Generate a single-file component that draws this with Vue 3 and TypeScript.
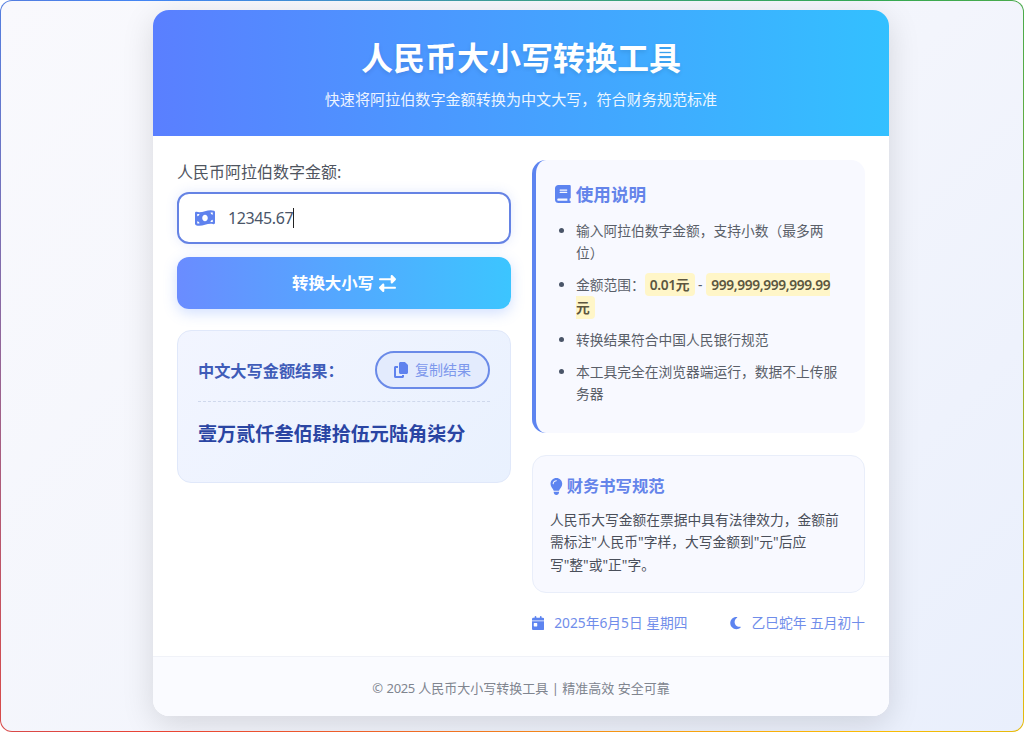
<script setup lang="ts">
const rules: string[] = ['转换结果符合中国人民银行规范', '本工具完全在浏览器端运行，数据不上传服务器']
</script>

<template>
  <div class="frame">
    <div class="page">
      <main class="card">
        <header class="head">
          <h1>人民币大小写转换工具</h1>
          <p>快速将阿拉伯数字金额转换为中文大写，符合财务规范标准</p>
        </header>
        <section class="body">
          <div class="col-left">
            <label class="label">人民币阿拉伯数字金额:</label>
            <div class="input">
              <svg class="i-money" viewBox="0 0 576 512"><path d="M0 112.5V422.3c0 18 10.1 35 27 41.3c87 32.5 174 10.3 261-11.9c79.8-20.3 159.6-40.7 239.3-18.9c23 6.3 48.7-9.5 48.7-33.4V89.7c0-18-10.1-35-27-41.3C462 15.9 375 38.1 288 60.3C208.2 80.6 128.4 100.9 48.7 79.1C25.6 72.8 0 88.6 0 112.5zM288 352c-44.2 0-80-43-80-96s35.8-96 80-96s80 43 80 96s-35.8 96-80 96zM64 352c35.3 0 64 28.7 64 64H64V352zm64-208c0 35.3-28.7 64-64 64V144h64zM512 304v64H448c0-35.3 28.7-64 64-64zM448 96h64v64c-35.3 0-64-28.7-64-64z"/></svg>
              <span class="value num">12345.67</span><span class="caret"></span>
            </div>
            <button class="convert">
              <span>转换大小写</span>
              <svg class="i-swap" viewBox="0 0 512 512"><path d="M32 96l320 0V32c0-12.9 7.8-24.6 19.8-29.6s25.7-2.2 34.9 6.9l96 96c6 6 9.4 14.1 9.4 22.6s-3.4 16.6-9.4 22.6l-96 96c-9.2 9.2-22.9 11.9-34.9 6.9s-19.8-16.6-19.8-29.6V160L32 160c-17.7 0-32-14.3-32-32s14.3-32 32-32zM480 352c17.7 0 32 14.3 32 32s-14.3 32-32 32H160v64c0 12.9-7.8 24.6-19.8 29.6s-25.7 2.2-34.9-6.9l-96-96c-6-6-9.4-14.1-9.4-22.6s3.4-16.6 9.4-22.6l96-96c9.2-9.2 22.9-11.9 34.9-6.9s19.8 16.6 19.8 29.6l0 64H480z"/></svg>
            </button>
            <div class="result">
              <div class="result-head">
                <span class="result-title">中文大写金额结果：</span>
                <button class="copy">
                  <svg class="i-copy" viewBox="0 0 448 512"><path d="M208 0H332.1c12.7 0 24.9 5.1 33.9 14.1l67.9 67.9c9 9 14.1 21.2 14.1 33.9V336c0 26.5-21.5 48-48 48H208c-26.5 0-48-21.5-48-48V48c0-26.5 21.5-48 48-48zM48 128h80v64H64V448H256V416h64v48c0 26.5-21.5 48-48 48H48c-26.5 0-48-21.5-48-48V176c0-26.5 21.5-48 48-48z"/></svg>
                  <span>复制结果</span>
                </button>
              </div>
              <div class="result-text">壹万贰仟叁佰肆拾伍元陆角柒分</div>
            </div>
          </div>
          <div class="col-right">
            <div class="info">
              <h3 class="info-title">
                <svg class="i-book" viewBox="0 0 448 512"><path d="M96 0C43 0 0 43 0 96V416c0 53 43 96 96 96H384h32c17.7 0 32-14.3 32-32s-14.3-32-32-32V384c17.7 0 32-14.3 32-32V32c0-17.7-14.3-32-32-32H384 96zm0 384H352v64H96c-17.7 0-32-14.3-32-32s14.3-32 32-32zm32-240c0-8.8 7.2-16 16-16H336c8.8 0 16 7.2 16 16s-7.2 16-16 16H144c-8.8 0-16-7.2-16-16zm16 48H336c8.8 0 16 7.2 16 16s-7.2 16-16 16H144c-8.8 0-16-7.2-16-16s7.2-16 16-16z"/></svg>
                <span>使用说明</span>
              </h3>
              <ul>
                <li>输入阿拉伯数字金额，支持小数（最多两位）</li>
                <li>金额范围：<span class="hl"><span class="num">0.01</span>元</span> - <span class="hl"><span class="num">999,999,999,999.99</span>元</span></li>
                <li v-for="r in rules" :key="r">{{ r }}</li>
              </ul>
            </div>
            <div class="tip">
              <h3 class="tip-title">
                <svg class="i-bulb" viewBox="0 0 384 512"><path d="M272 384c9.6-31.9 29.5-59.1 49.2-86.2l0 0c5.2-7.1 10.4-14.2 15.4-21.4c19.8-28.5 31.4-63 31.4-100.3C368 78.8 289.2 0 192 0S16 78.8 16 176c0 37.3 11.6 71.9 31.4 100.3c5 7.2 10.2 14.3 15.4 21.4l0 0c19.8 27.1 39.7 54.4 49.2 86.2H272zM192 512c44.2 0 80-35.8 80-80V416H112v16c0 44.2 35.8 80 80 80zM112 176c0 8.8-7.2 16-16 16s-16-7.2-16-16c0-61.9 50.1-112 112-112c8.8 0 16 7.2 16 16s-7.2 16-16 16c-44.2 0-80 35.8-80 80z"/></svg>
                <span>财务书写规范</span>
              </h3>
              <p>人民币大写金额在票据中具有法律效力，金额前需标注"人民币"字样，大写金额到"元"后应写"整"或"正"字。</p>
            </div>
            <div class="dates">
              <span class="date">
                <svg class="i-cal" viewBox="0 0 448 512"><path d="M128 0c17.7 0 32 14.3 32 32V64H288V32c0-17.7 14.3-32 32-32s32 14.3 32 32V64h48c26.5 0 48 21.5 48 48v48H0V112C0 85.5 21.5 64 48 64H96V32c0-17.7 14.3-32 32-32zM0 192H448V464c0 26.5-21.5 48-48 48H48c-26.5 0-48-21.5-48-48V192zm80 64c-8.8 0-16 7.2-16 16v96c0 8.8 7.2 16 16 16h96c8.8 0 16-7.2 16-16V272c0-8.8-7.2-16-16-16H80z"/></svg>
                <span>2025年6月5日 星期四</span>
              </span>
              <span class="date">
                <svg class="i-moon" viewBox="0 0 384 512"><path d="M223.5 32C100 32 0 132.3 0 256S100 480 223.5 480c60.6 0 115.5-24.2 155.8-63.4c5-4.9 6.3-12.5 3.1-18.7s-10.1-9.7-17-8.5c-9.8 1.7-19.8 2.6-30.1 2.6c-96.9 0-175.5-78.8-175.5-176c0-65.8 36-123.1 89.3-153.3c6.1-3.5 9.2-10.5 7.7-17.3s-7.3-11.9-14.3-12.5c-6.3-.5-12.6-.8-19-.8z"/></svg>
                <span>乙巳蛇年 五月初十</span>
              </span>
            </div>
          </div>
        </section>
        <footer class="foot"><span>© <span class="num">2025</span> 人民币大小写转换工具 | 精准高效 安全可靠</span></footer>
      </main>
    </div>
  </div>
</template>

<style>
html, body { margin: 0; padding: 0; }
</style>

<style scoped>
* { box-sizing: border-box; }
svg { display: block; fill: currentColor; flex: none; }
.num { letter-spacing: -0.025em; }
.frame {
  width: 1024px;
  height: 732px;
  padding: 1px;
  border-radius: 12px;
  overflow: hidden;
  background: conic-gradient(from 0deg, #3b9e8f 0deg, #34a853 45deg, #fbbc05 135deg, #ea4335 225deg, #4285f4 315deg, #3b9e8f 360deg);
  font-family: "Noto Sans", "Noto Sans CJK SC", sans-serif;
  text-spacing-trim: space-all;
}
.page {
  height: 730px;
  border-radius: 11px;
  overflow: hidden;
  padding: 9px 0 0 152px;
  background: linear-gradient(135deg, #f9f9fd 0%, #f3f5fc 55%, #e9effc 100%);
}
.card {
  width: 736px;
  height: 706px;
  border-radius: 16px;
  overflow: hidden;
  background: #fff;
  box-shadow: 0 8px 32px rgba(0, 0, 0, 0.13);
  display: flex;
  flex-direction: column;
}
.head {
  height: 126px;
  padding-top: 26px;
  text-align: center;
  color: #fff;
  background: linear-gradient(90deg, #5a7fff 0%, #33c0ff 100%);
}
.head h1 {
  margin: 0 0 8px;
  font-size: 32px;
  line-height: 44px;
  font-weight: 700;
  text-shadow: 0 2px 4px rgba(0, 0, 0, 0.1);
}
.head p {
  margin: 0;
  font-size: 15.1px;
  line-height: 22px;
  opacity: 0.9;
}
.body {
  height: 520px;
  padding: 24px 24px 0;
  display: grid;
  grid-template-columns: 334px 333px;
  column-gap: 21px;
}
.label {
  display: block;
  font-size: 16px;
  line-height: 24px;
  color: #4f5560;
  margin-bottom: 8px;
}
.input {
  height: 52px;
  border: 2px solid #6583e4;
  border-radius: 12px;
  background: #fff;
  padding-left: 16px;
  display: flex;
  align-items: center;
  box-shadow: 0 0 12px rgba(90, 125, 240, 0.16);
  color: #4a5568;
}
.i-money { width: 20px; height: 18px; color: #5f82ee; margin-right: 13px; }
.value { font-size: 16px; line-height: 24px; }
.caret { width: 1px; height: 20px; background: #222; }
.convert {
  display: flex;
  width: 100%;
  height: 52px;
  margin-top: 13px;
  border: 0;
  border-radius: 12px;
  align-items: center;
  justify-content: center;
  gap: 5px;
  color: #fff;
  font: 700 16.4px/24px "Noto Sans", "Noto Sans CJK SC", sans-serif;
  background: linear-gradient(90deg, #6a8cff 0%, #3cc5ff 100%);
  box-shadow: 0 4px 14px rgba(90, 140, 255, 0.28);
}
.i-swap { width: 17px; height: 17px; }
.result {
  height: 153px;
  margin-top: 21px;
  padding: 20px 20px 0;
  border: 1px solid #e0e8fa;
  border-radius: 14px;
  background: linear-gradient(135deg, #f2f5ff 0%, #e9f1fe 100%);
}
.result-head {
  display: flex;
  align-items: center;
  justify-content: space-between;
  padding-bottom: 12px;
  border-bottom: 1px dashed #cfd8ec;
}
.result-title {
  padding-top: 2px;
  font-size: 16.2px;
  line-height: 24px;
  font-weight: 700;
  color: #3f5cb8;
}
.copy {
  display: flex;
  align-items: center;
  gap: 7px;
  height: 38px;
  padding: 0 17px;
  border: 2px solid #6a8ae8;
  border-radius: 19px;
  background: #e3ebfd;
  color: #7d98ec;
  font: 400 14px/20px "Noto Sans", "Noto Sans CJK SC", sans-serif;
}
.i-copy { width: 14px; height: 16px; color: #5f82ee; }
.result-text {
  margin-top: 17px;
  font-size: 19.1px;
  line-height: 30px;
  font-weight: 700;
  color: #2a45a3;
}
.info {
  height: 273px;
  padding: 20px 20px 0 19px;
  border-left: 4px solid #5d84f0;
  border-radius: 14px;
  background: #f8f9ff;
}
.info-title, .tip-title {
  display: flex;
  align-items: center;
  margin: 0;
  font-weight: 700;
  color: #6484ea;
}
.info-title {
  font-size: 17.6px;
  line-height: 28px;
  gap: 5px;
  margin-bottom: 12px;
}
.i-book { width: 15.75px; height: 18px; color: #5d84f0; }
ul {
  margin: 0;
  padding: 0 4px 0 21px;
  font-size: 13.76px;
  line-height: 22.4px;
  color: #5a5f69;
}
li { margin-bottom: 9.6px; }
li::marker { color: #4a5568; }
.hl {
  padding: 2px 5px;
  border-radius: 4px;
  background: #fff6c8;
  color: #5c5640;
  font-weight: 600;
}
.tip {
  height: 138px;
  margin-top: 22px;
  padding: 18px 18px 0 17px;
  border: 1px solid #e9eefa;
  border-radius: 14px;
  background: #f8f9ff;
}
.tip-title {
  font-size: 16.3px;
  line-height: 25px;
  gap: 4px;
  margin-bottom: 10px;
}
.i-bulb { width: 12.75px; height: 17px; color: #5d84f0; }
.tip p {
  margin: 0;
  font-size: 13.76px;
  line-height: 22.4px;
  color: #4a4f5a;
}
.dates {
  display: flex;
  justify-content: space-between;
  margin-top: 19px;
  font-size: 13.76px;
  line-height: 22px;
  color: #708dea;
}
.date { display: flex; align-items: center; gap: 10px; }
.i-cal { width: 12.25px; height: 14px; color: #5d84f0; }
.i-moon { width: 11px; height: 14px; color: #5d84f0; }
.foot {
  height: 60px;
  padding-top: 1px;
  display: flex;
  align-items: center;
  justify-content: center;
  border-top: 1px solid #f0f2f8;
  background: #fafbff;
  font-size: 13px;
  color: #80858f;
}
</style>
